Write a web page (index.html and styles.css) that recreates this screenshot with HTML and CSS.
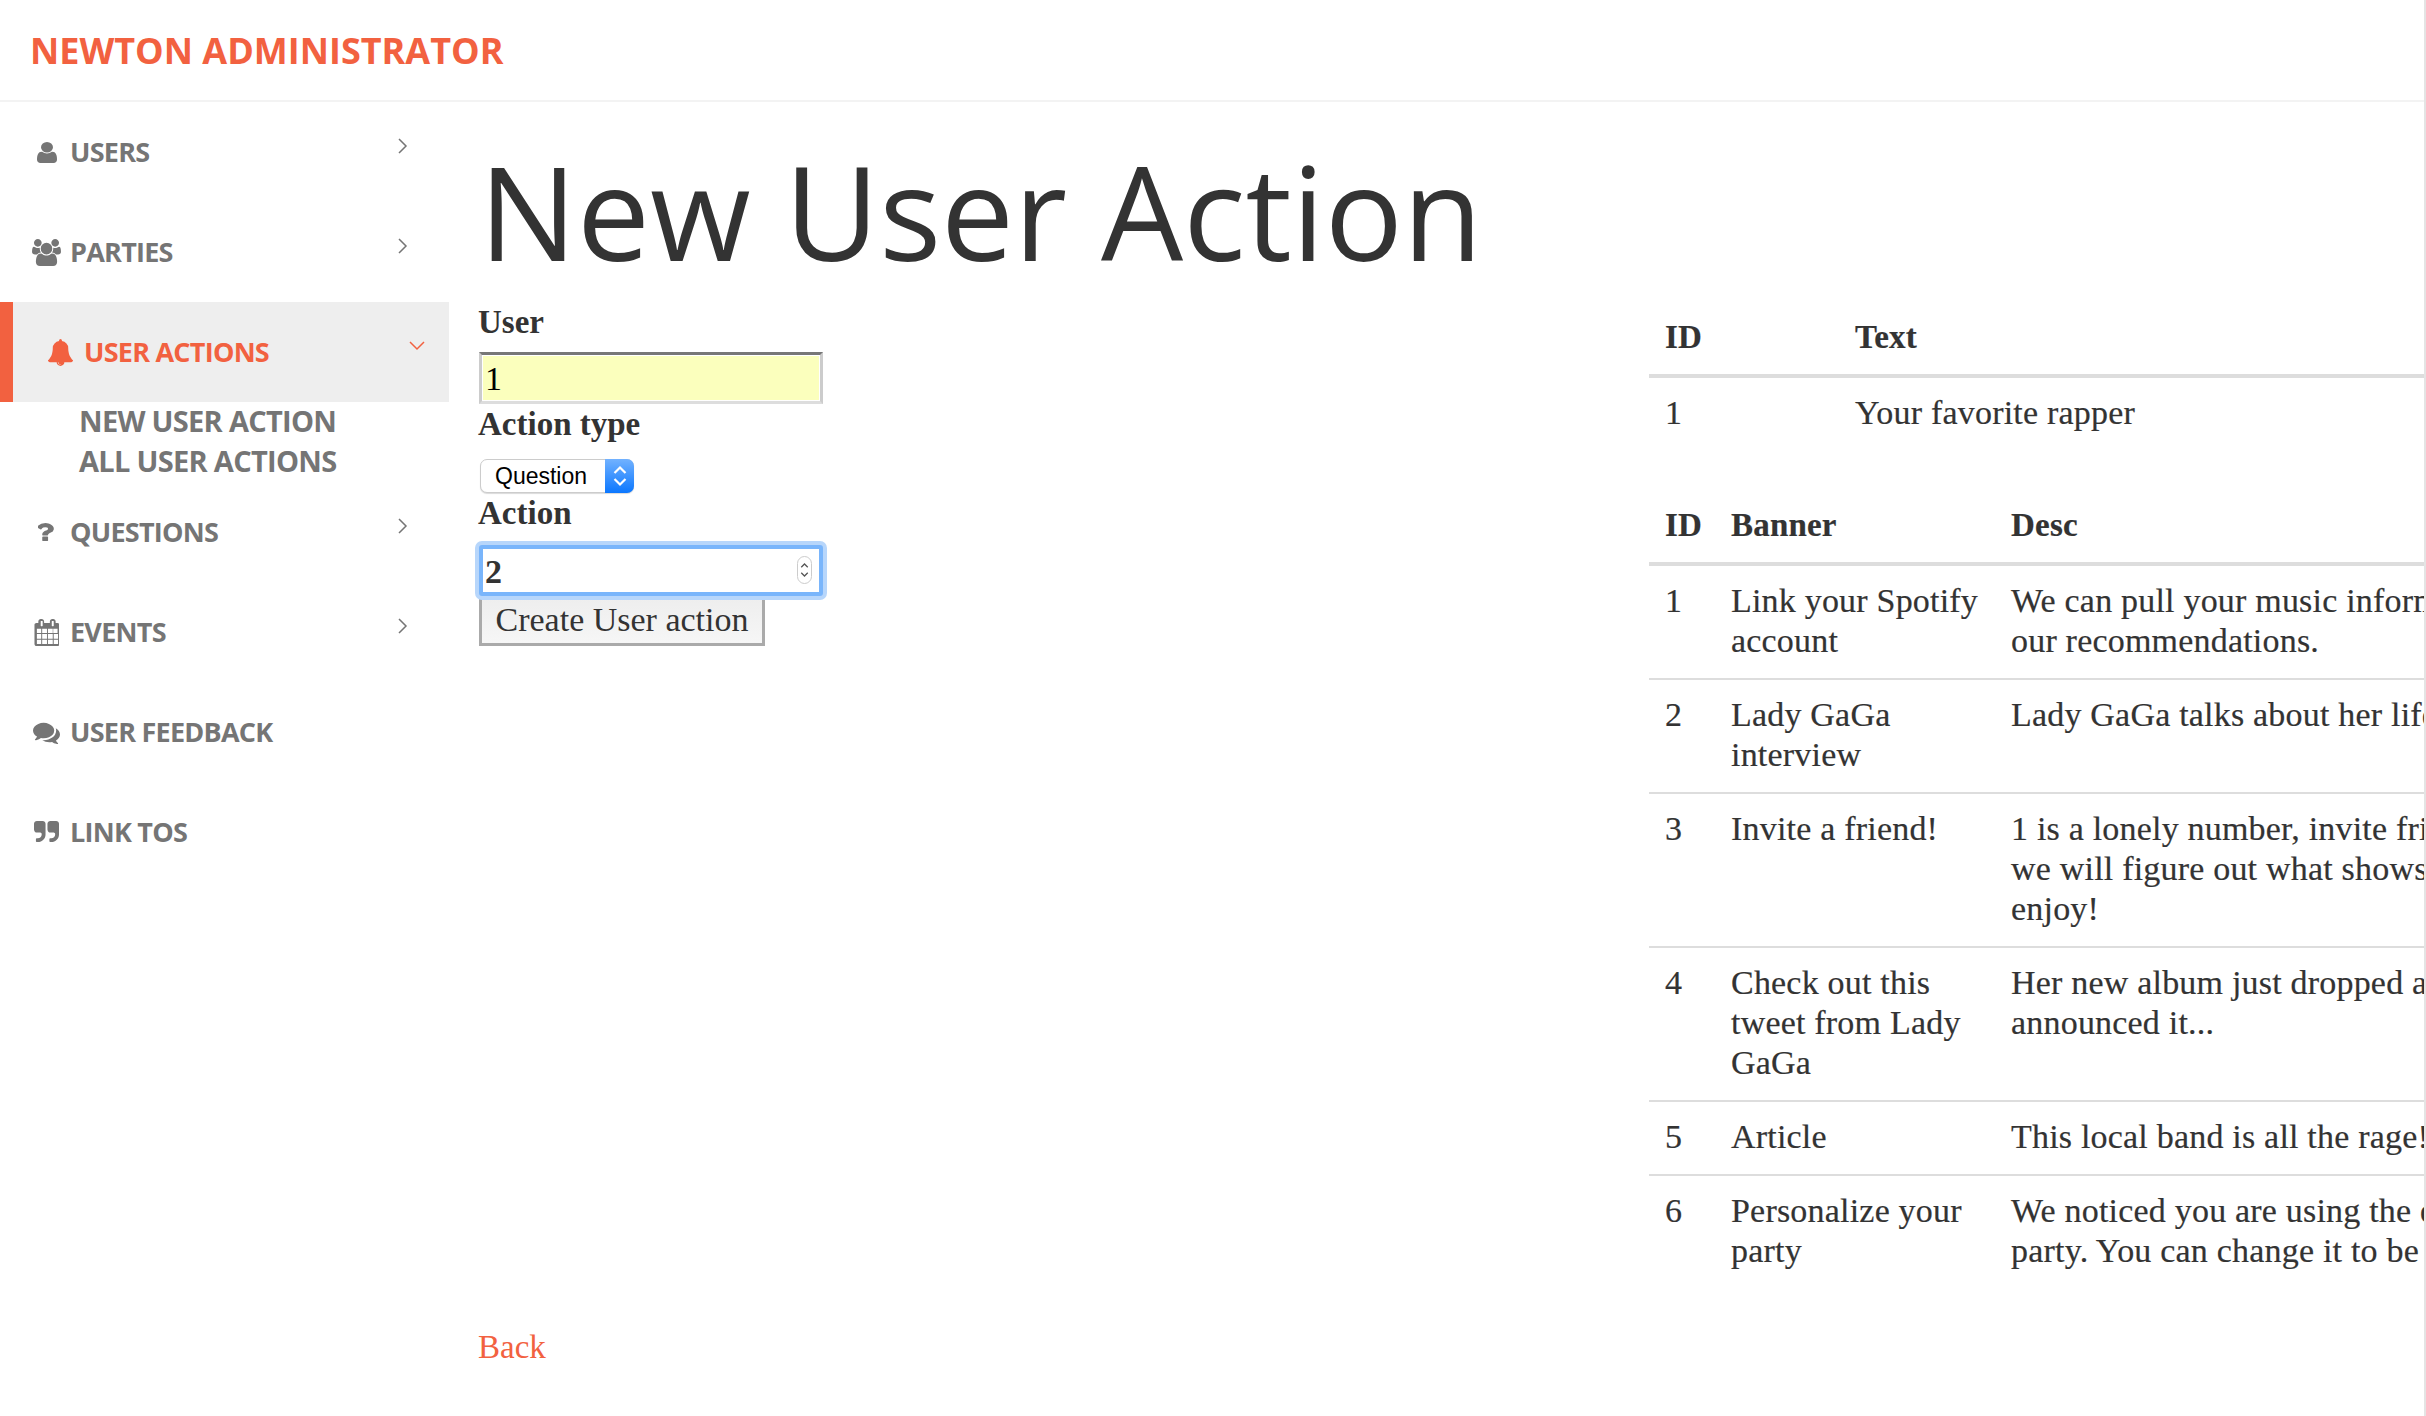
FILE: index.html
```html
<!DOCTYPE html>
<html lang="en">
<head>
<meta charset="utf-8">
<title>New User Action</title>
<link rel="stylesheet" href="styles.css">
</head>
<body>
<header class="topbar"><a class="brand" href="#">NEWTON ADMINISTRATOR</a></header>
<div class="layout">
  <nav class="sidebar">
    <a class="nav-item" href="#">
      <span class="nav-icon"><svg class="ic" viewBox="192 128 1344 1536" width="21" height="21" preserveAspectRatio="none"><path d="M1536 1399q0 109-62.500 187t-150.500 78h-854q-88 0-150.500-78t-62.500-187q0-85 8.500-160.500t31.500-152 58.500-131 94-89 134.500-34.500q131 128 313 128t313-128q76 0 134.500 34.500t94 89 58.500 131 31.500 152 8.500 160.500zm-256-887q0 159-112.500 271.500t-271.500 112.500-271.500-112.500-112.500-271.500 112.500-271.500 271.500-112.500 271.500 112.500 112.500 271.500z"/></svg></span>
      <span class="nav-label">USERS</span>
      <svg class="chev" viewBox="0 0 10 16" width="10" height="16"><path d="M1 1l7 7-7 7"/></svg>
    </a>
    <a class="nav-item" href="#">
      <span class="nav-icon"><svg class="ic" viewBox="0 0 1920 1792" width="29" height="27"><path d="M593 896q-162 5-265 128h-134q-82 0-138-40.500t-56-118.500q0-353 124-353 6 0 43.500 21t97.500 42.500 119 21.500q67 0 133-23-5 37-5 66 0 139 81 256zm1071 637q0 120-73 189.500t-194 69.500h-874q-121 0-194-69.500t-73-189.500q0-53 3.500-103.500t14-109 26.500-108.500 43-97.500 62-81 85.500-53.500 111.500-20q10 0 43 21.500t73 48 107 48 135 21.500 135-21.500 107-48 73-48 43-21.500q61 0 111.500 20t85.500 53.500 62 81 43 97.500 26.500 108.500 14 109 3.500 103.500zm-1024-1277q0 106-75 181t-181 75-181-75-75-181 75-181 181-75 181 75 75 181zm704 384q0 159-112.500 271.500t-271.500 112.500-271.500-112.500-112.500-271.500 112.500-271.500 271.500-112.500 271.500 112.500 112.500 271.500zm576 225q0 78-56 118.500t-138 40.500h-134q-103-123-265-128 81-117 81-256 0-29-5-66 66 23 133 23 59 0 119-21.500t97.500-42.500 43.500-21q124 0 124 353zm-128-609q0 106-75 181t-181 75-181-75-75-181 75-181 181-75 181 75 75 181z"/></svg></span>
      <span class="nav-label">PARTIES</span>
      <svg class="chev" viewBox="0 0 10 16" width="10" height="16"><path d="M1 1l7 7-7 7"/></svg>
    </a>
    <a class="nav-item active" href="#">
      <span class="nav-icon"><svg class="ic" viewBox="0 0 1792 1792" width="27" height="27"><path d="M912 1696q0-16-16-16-59 0-101.500-42.500t-42.500-101.500q0-16-16-16t-16 16q0 73 51.500 124.500t124.500 51.500q16 0 16-16zm816-288q0 52-38 90t-90 38h-448q0 106-75 181t-181 75-181-75-75-181h-448q-52 0-90-38t-38-90q50-42 91-88t85-119.500 74.500-158.500 50-206 19.500-260q0-152 117-282.500t307-158.500q-8-19-8-39 0-40 28-68t68-28 68 28 28 68q0 20-8 39 190 28 307 158.500t117 282.500q0 139 19.500 260t50 206 74.500 158.500 85 119.500 91 88z"/></svg></span>
      <span class="nav-label">USER ACTIONS</span>
      <svg class="chev down" viewBox="0 0 16 10" width="16" height="10"><path d="M1 1l7 7 7-7"/></svg>
    </a>
    <div class="subnav">
      <a href="#">NEW USER ACTION</a>
      <a href="#">ALL USER ACTIONS</a>
    </div>
    <a class="nav-item" href="#">
      <span class="nav-icon"><svg class="ic" viewBox="150 250 880 1290" width="16" height="18" preserveAspectRatio="none"><path d="M704 1256v240q0 16-12 28t-28 12h-240q-16 0-28-12t-12-28v-240q0-16 12-28t28-12h240q16 0 28 12t12 28zm316-600q0 54-15.500 101t-35 76.500-55 59.500-57.500 43.500-61 35.500q-41 23-68.500 65t-27.500 67q0 17-12 32.500t-28 15.500h-240q-15 0-25.500-18.500t-10.500-37.500v-45q0-83 65-156.500t143-108.500q59-27 84-56t25-76q0-42-46.500-74t-107.500-32q-65 0-108 29-35 25-107 115-13 16-31 16-12 0-25-8l-164-125q-13-10-15.500-25t5.500-28q160-266 464-266 80 0 161 31t146 83 106 127.500 41 158.500z"/></svg></span>
      <span class="nav-label">QUESTIONS</span>
      <svg class="chev" viewBox="0 0 10 16" width="10" height="16"><path d="M1 1l7 7-7 7"/></svg>
    </a>
    <a class="nav-item" href="#">
      <span class="nav-icon"><svg class="ic" viewBox="0 0 1664 1792" width="25" height="27"><path d="M192 1664h288v-288h-288v288zm352 0h320v-288h-320v288zm-352-352h288v-320h-288v320zm352 0h320v-320h-320v320zm-352-384h288v-288h-288v288zm736 736h320v-288h-320v288zm-384-736h320v-288h-320v288zm768 736h288v-288h-288v288zm-384-352h320v-320h-320v320zm-352-864v-288q0-13-9.500-22.500t-22.500-9.500h-64q-13 0-22.500 9.500t-9.500 22.500v288q0 13 9.500 22.500t22.500 9.500h64q13 0 22.500-9.500t9.500-22.500zm736 864h288v-320h-288v320zm-384-384h320v-288h-320v288zm352 0h288v-288h-288v288zm32-480v-288q0-13-9.500-22.500t-22.500-9.500h-64q-13 0-22.500 9.500t-9.500 22.500v288q0 13 9.500 22.500t22.500 9.500h64q13 0 22.500-9.500t9.500-22.500zm384-64v1280q0 52-38 90t-90 38h-1408q-52 0-90-38t-38-90v-1280q0-52 38-90t90-38h128v-96q0-66 47-113t113-47h64q66 0 113 47t47 113v96h384v-96q0-66 47-113t113-47h64q66 0 113 47t47 113v96h128q52 0 90 38t38 90z"/></svg></span>
      <span class="nav-label">EVENTS</span>
      <svg class="chev" viewBox="0 0 10 16" width="10" height="16"><path d="M1 1l7 7-7 7"/></svg>
    </a>
    <a class="nav-item" href="#">
      <span class="nav-icon"><svg class="ic" viewBox="0 0 1792 1792" width="27" height="27"><path d="M1408 768q0 139-94 257t-256.500 186.500-353.500 68.500q-86 0-176-16-124 88-278 128-36 9-86 16h-3q-11 0-20.500-8t-11.500-21q-1-3-1-6.500t.5-6.500 2-6l2.500-5 3.500-5.500 4-5 4.500-5 4-4.500q5-6 23-25t26-29.500 22.500-29 25-38.500 20.500-44q-124-72-195-177t-71-224q0-139 94-257t256.500-186.500 353.500-68.500 353.500 68.500 256.500 186.500 94 257zm384 256q0 120-71 224.500t-195 176.500q10 24 20.500 44t25 38.500 22.500 29 26 29.500 23 25q1 1 4 4.500t4.500 5 4 5 3.500 5.500l2.500 5 2 6 .5 6.500-1 6.500q-3 14-13 22t-22 7q-50-7-86-16-154-40-278-128-90 16-176 16-271 0-472-132 58 4 88 4 161 0 309-45t264-129q125-92 192-212t67-254q0-77-23-152 129 71 204 178t75 230z"/></svg></span>
      <span class="nav-label">USER FEEDBACK</span>
    </a>
    <a class="nav-item" href="#">
      <span class="nav-icon"><svg class="ic" viewBox="0 0 1664 1792" width="25" height="27"><path d="M768 320v704q0 104-40.500 198.500t-109.500 163.500-163.500 109.500-198.500 40.500h-64q-26 0-45-19t-19-45v-128q0-26 19-45t45-19h64q106 0 181-75t75-181v-32q0-40-28-68t-68-28h-224q-80 0-136-56t-56-136v-384q0-80 56-136t136-56h384q80 0 136 56t56 136zm896 0v704q0 104-40.500 198.500t-109.500 163.500-163.500 109.500-198.500 40.500h-64q-26 0-45-19t-19-45v-128q0-26 19-45t45-19h64q106 0 181-75t75-181v-32q0-40-28-68t-68-28h-224q-80 0-136-56t-56-136v-384q0-80 56-136t136-56h384q80 0 136 56t56 136z"/></svg></span>
      <span class="nav-label">LINK TOS</span>
    </a>
  </nav>

  <main class="main">
    <h1 class="title">New User Action</h1>
    <form class="form">
      <label class="field-label" for="user">User</label>
      <input class="text-input autofilled" id="user" type="text" value="1">
      <label class="field-label type-label" for="type">Action type</label>
      <span class="select-wrap">
        <select class="select" id="type"><option>Question</option></select>
        <span class="select-arrow"><svg viewBox="0 0 14 22" width="14" height="22"><path d="M1.500 8l5.500-5.500 5.500 5.500M1.500 14l5.500 5.500 5.500-5.500"/></svg></span>
      </span>
      <label class="field-label action-label" for="action">Action</label>
      <span class="number-wrap">
        <input class="text-input focused" id="action" type="text" value="2">
        <span class="stepper"><svg viewBox="0 0 14 26" width="14" height="26"><path d="M3.500 10l3.500-3.500 3.500 3.500M3.500 16l3.500 3.500 3.500-3.500"/></svg></span>
      </span>
      <button class="submit" type="button">Create User action</button>
    </form>
    <a class="back" href="#">Back</a>
  </main>

  <section class="tables">
    <table class="data first">
      <colgroup><col class="c-a"><col class="c-b"></colgroup>
      <thead><tr><th>ID</th><th>Text</th></tr></thead>
      <tbody><tr><td>1</td><td>Your favorite rapper</td></tr></tbody>
    </table>
    <table class="data second">
      <colgroup><col class="c-c"><col class="c-d"><col class="c-e"></colgroup>
      <thead><tr><th>ID</th><th>Banner</th><th>Desc</th></tr></thead>
      <tbody>
        <tr><td>1</td><td>Link your Spotify<br>account</td><td>We can pull your music information to improve<br>our recommendations.</td></tr>
        <tr><td>2</td><td>Lady GaGa<br>interview</td><td>Lady GaGa talks about her life and her new album</td></tr>
        <tr><td>3</td><td>Invite a friend!</td><td>1 is a lonely number, invite friends and<br>we will figure out what shows you would all<br>enjoy!</td></tr>
        <tr><td>4</td><td>Check out this<br>tweet from Lady<br>GaGa</td><td>Her new album just dropped and she just<br>announced it...</td></tr>
        <tr><td>5</td><td>Article</td><td>This local band is all the rage!</td></tr>
        <tr><td>6</td><td>Personalize your<br>party</td><td>We noticed you are using the default name for your<br>party. You can change it to be anything you like</td></tr>
      </tbody>
    </table>
  </section>
</div>
</body>
</html>
```
FILE: styles.css
```css
* { box-sizing: border-box; }
html, body { margin: 0; padding: 0; height: 100%; }
body {
  width: 2426px;
  height: 1416px;
  overflow: hidden;
  background: #fff;
  color: #333;
  font-family: "Liberation Serif", serif;
  font-size: 34px;
  line-height: 40px;
  border-right: 2px solid #e4e4e4;
}
a { text-decoration: none; color: inherit; }

.topbar {
  height: 102px;
  padding: 0 30px;
  display: flex;
  align-items: center;
  border-bottom: 2px solid #f3f3f3;
}
.brand {
  font-family: "Open Sans", sans-serif;
  font-weight: 700;
  font-size: 36px;
  color: #f26140;
  margin-top: 1px;
}

.layout { display: flex; align-items: flex-start; height: 1314px; }

.sidebar {
  flex: 0 0 449px;
  width: 449px;
  font-family: "Open Sans", sans-serif;
  font-weight: 700;
  font-size: 27px;
  letter-spacing: -0.75px;
  color: #757575;
}
.nav-item {
  height: 100px;
  display: flex;
  align-items: center;
  padding-left: 30px;
  position: relative;
}
.nav-icon {
  flex: 0 0 40px;
  width: 40px;
  display: flex;
  justify-content: center;
  padding-right: 8px;
}
.ic { display: block; fill: #757575; }
.chev {
  position: absolute;
  left: 398px;
  top: 36px;
  fill: none;
  stroke: #757575;
  stroke-width: 1.5;
}
.nav-item.active {
  background: #eee;
  border-left: 13px solid #f26140;
  padding-left: 31px;
  color: #f26140;
}
.nav-item.active .ic { fill: #f26140; }
.chev.down { left: 396px; top: 39px; stroke: #f26140; }

.subnav {
  display: flex;
  flex-direction: column;
  padding-left: 79px;
  height: 80px;
  font-size: 29px;
  letter-spacing: -0.7px;
}
.subnav a { height: 40px; line-height: 38px; }

.main {
  flex: 0 0 1200px;
  width: 1200px;
  padding-left: 29px;
  height: 1314px;
  position: relative;
  display: flex;
  flex-direction: column;
  align-items: flex-start;
}
.title {
  margin: 0;
  height: 200px;
  padding: 34px 0 0 1px;
  line-height: 150px;
  font-family: "Open Sans", sans-serif;
  font-weight: 400;
  font-size: 130px;
  color: #333;
  white-space: nowrap;
}
.form { display: flex; flex-direction: column; align-items: flex-start; }
.field-label {
  font-weight: 700;
  font-size: 33px;
  line-height: 40px;
  color: #333;
  display: block;
}
.text-input {
  width: 344px;
  height: 52px;
  margin: 10px 0 0 1px;
  padding: 2px 2px 0 3px;
  border: 3px solid #ddd;
  border-top-color: #777;
  border-left-color: #ccc;
  border-right-color: #ccc;
  font-family: "Liberation Serif", serif;
  font-size: 34px;
  color: #333;
  outline: none;
  background: #fff;
}
.autofilled { background: #fbffbd; color: #000; box-shadow: inset 0 0 0 1px #fff; }
.select-wrap { position: relative; display: block; margin: 15px 0 0 2px; height: 34px; }
.select {
  display: block;
  width: 154px;
  height: 34px;
  appearance: none;
  -webkit-appearance: none;
  padding: 0 0 0 14px;
  border: 1px solid #ccc;
  border-radius: 7px;
  background: #fff;
  font-family: "Liberation Sans", sans-serif;
  font-size: 23px;
  color: #000;
  box-shadow: 0 1px 1px rgba(0,0,0,.15);
}
.select-arrow {
  position: absolute;
  right: 0;
  top: 0;
  width: 29px;
  height: 34px;
  border-radius: 0 7px 7px 0;
  background: linear-gradient(#72b2ff, #0b77ff);
  display: flex;
  align-items: center;
  justify-content: center;
}
.select-arrow path { fill: none; stroke: #fff; stroke-width: 2.2; }
.number-wrap { position: relative; display: block; }
.focused {
  display: block;
  height: 51px;
  margin-top: 12px;
  border: 4px solid #79b5fb;
  box-shadow: 0 0 0 4px #b7d6fb;
  border-radius: 3px;
  font-weight: 700;
  padding-left: 2px;
}
.stepper {
  position: absolute;
  right: 11px;
  bottom: 12px;
  width: 15px;
  height: 28px;
  border: 1px solid #ccc;
  border-radius: 8px;
  display: flex;
  align-items: center;
  justify-content: center;
  background: #fff;
}
.stepper path { fill: none; stroke: #555; stroke-width: 1.4; }
.submit {
  width: 286px;
  height: 50px;
  margin: 0 0 0 1px;
  padding: 0 0 2px;
  border: 3px solid #aaa;
  border-radius: 0;
  background: linear-gradient(#eee, #f6f6f6);
  font-family: "Liberation Serif", serif;
  font-size: 34px;
  color: #333;
}
.back {
  position: absolute;
  left: 29px;
  top: 1225px;
  color: #f26140;
  font-size: 33px;
  line-height: 40px;
}

.tables { flex: 1 1 0; min-width: 0; padding-top: 200px; overflow: hidden; height: 1314px; }
.data {
  border-collapse: collapse;
  table-layout: fixed;
  white-space: nowrap;
  text-align: left;
}
.first { width: 1400px; margin-bottom: 40px; }
.second { width: 1400px; }
.c-a { width: 190px; }
.c-c { width: 66px; }
.c-d { width: 280px; }
.data th, .data td { padding: 15px 16px 17px; vertical-align: top; font-size: 34px; line-height: 40px; letter-spacing: 0.2px; -webkit-text-stroke: 0.2px #333; }
.data th { border-bottom: 4px solid #ddd; font-weight: 700; font-size: 33px; }
.data tbody tr + tr td { border-top: 2px solid #ddd; }
```
